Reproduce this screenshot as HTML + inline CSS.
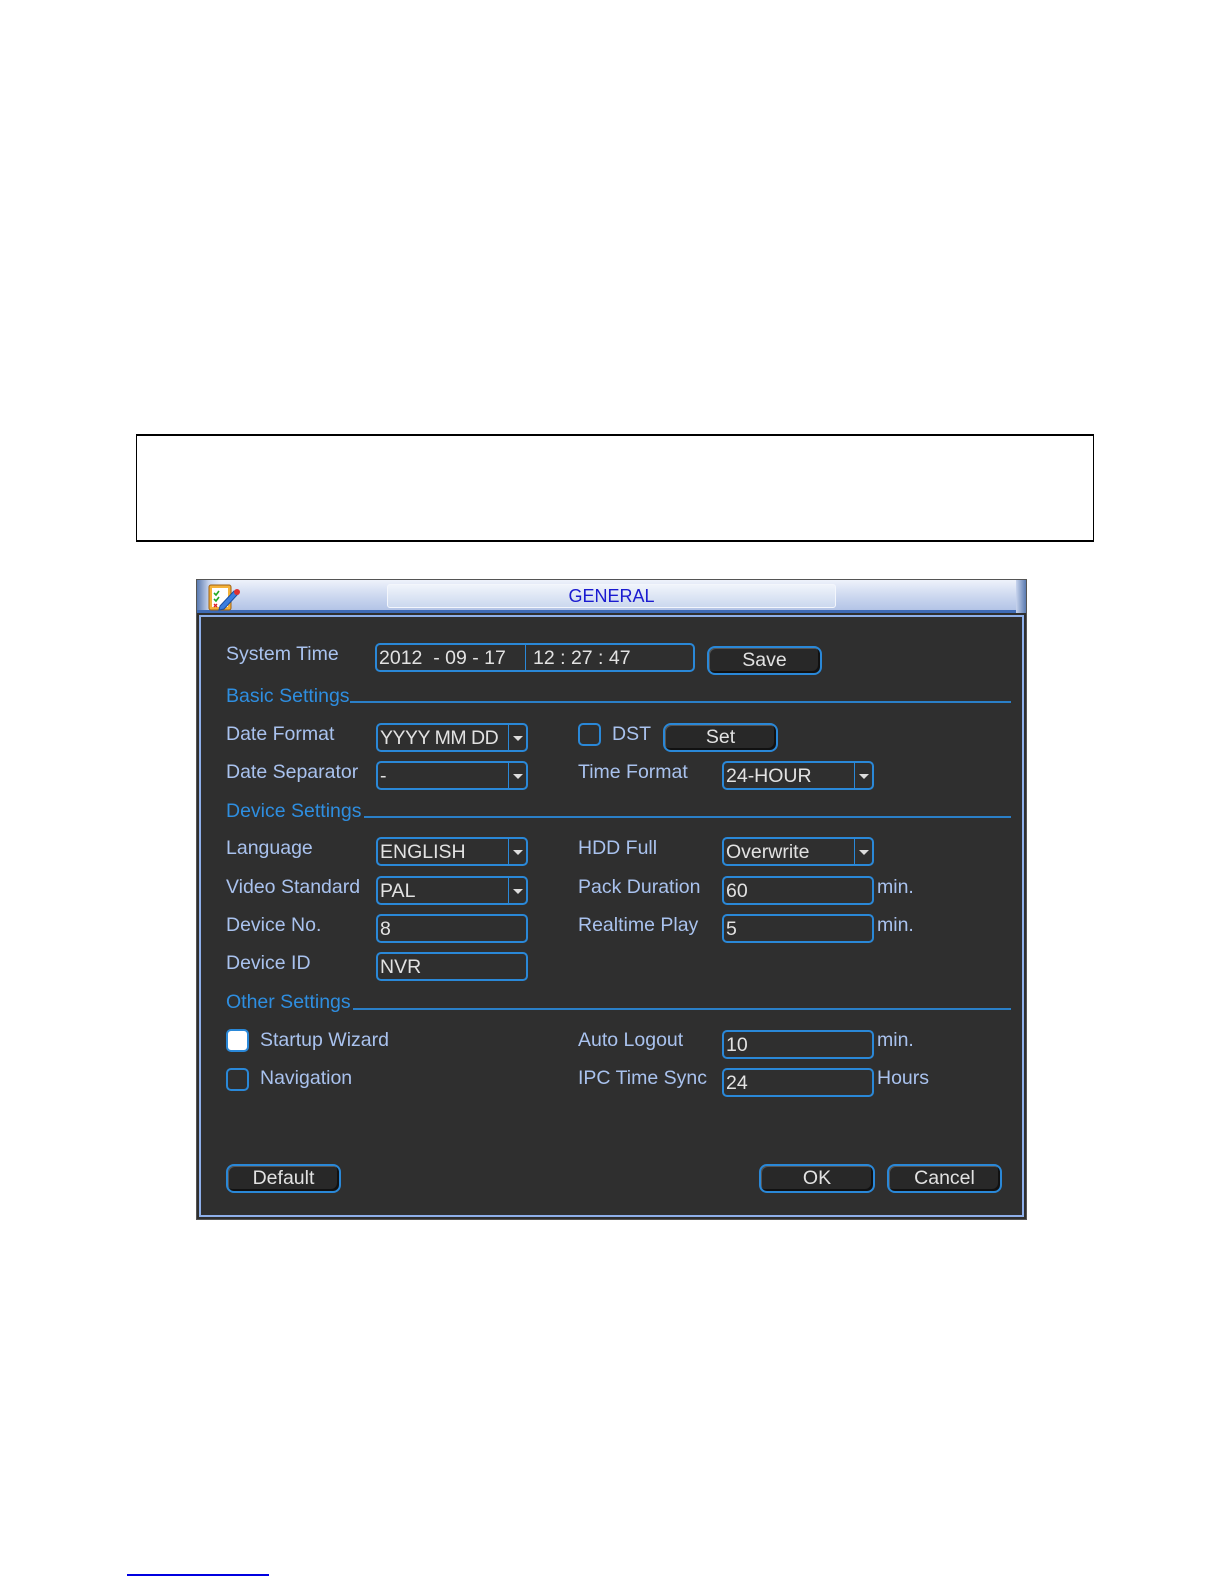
<!DOCTYPE html>
<html><head><meta charset="utf-8"><style>
*{margin:0;padding:0;box-sizing:border-box}
body{width:1225px;height:1585px;background:#fff;position:relative;overflow:hidden;font-family:"Liberation Sans",Arial,sans-serif}
.a{position:absolute}
.box{position:absolute;left:136px;top:434px;width:958px;height:108px;border:1px solid #000;border-top-width:2px;border-bottom-width:2px}
.link{position:absolute;left:127px;top:1574px;width:142px;height:2px;background:#0000e0}
.dlg{position:absolute;left:196px;top:579px;width:831px;height:641px;background:#2f2f2f;border:1px solid #555}
.tb{position:absolute;left:0;top:0;width:829px;height:33px;background:linear-gradient(90deg,#5a7ab0 0,#c9d5ee 12px,transparent 24px),linear-gradient(#eef2fb,#c9d5ee 60%,#b3c4e6);border-bottom:3px solid #3f6bb5}
.tb .c{position:absolute;left:190px;top:4px;width:449px;height:24px;border:1px solid #f3f6fc;border-radius:3px;background:linear-gradient(#f0f4fb,#cbd8ee);text-align:center;font-size:18px;line-height:23px;color:#1a1ad0}
.tb .r{position:absolute;right:0;top:0;width:10px;height:33px;background:linear-gradient(90deg,#c9d5ee,#5a7ab0)}
.inner{position:absolute;left:2px;top:35px;right:2px;bottom:2px;border:2px solid #8fb0ea}
.l{position:absolute;color:#a9c2ee;font-size:19.5px;line-height:28px;white-space:nowrap}
.h{position:absolute;color:#2e8ee0;font-size:19.5px;line-height:28px;white-space:nowrap}
.line{position:absolute;height:2px;background:#2a7fc8}
.in{position:absolute;height:29px;border:2px solid #2a88d8;border-radius:5px;color:#e2e2e2;font-size:19.5px;line-height:26px;padding-left:2px;white-space:nowrap}
.dd{position:absolute;right:0;top:0;width:18px;height:25px;border-left:1px solid #2a88d8}
.dd:after{content:"";position:absolute;left:4px;top:11px;border-left:5px solid transparent;border-right:5px solid transparent;border-top:5px solid #ddd}
.bt{position:absolute;height:29px;border:2px solid #2a88d8;border-radius:8px;background:#282828;box-shadow:inset -2px -2px 0 #111,inset 1px 1px 0 #555;color:#e2e2e2;font-size:19.5px;line-height:25px;text-align:center}
.cb{position:absolute;width:23px;height:23px;border:2px solid #2a88d8;border-radius:5px}
</style></head><body>
<div class="box"></div>
<div class="link"></div>

<div class="dlg">
 <div class="tb">
  <svg class="a" style="left:10px;top:2px" width="36" height="30" viewBox="0 0 36 30">
   <rect x="2" y="3" width="22" height="25" rx="2" fill="#f4b23a" stroke="#a06010"/>
   <rect x="5" y="6" width="16" height="19" fill="#fff"/>
   <path d="M7 11l2 2 3-4M7 17l2 2 3-4" stroke="#2a2" stroke-width="1.6" fill="none"/>
   <path d="M7 22l3 3M10 22l-3 3" stroke="#d22" stroke-width="1.4"/>
   <path d="M13 24l14-15 4 3-14 15-5 1z" fill="#3a7ee0" stroke="#1a4ea0"/>
   <circle cx="30" cy="10" r="3" fill="#e03030"/>
  </svg>
  <div class="c">GENERAL</div>
  <div class="r"></div>
 </div>
 <div class="inner"></div>
</div>

<div class="l" style="left:226px;top:640px">System Time</div>
<div class="in" style="left:375px;top:643px;width:320px;">2012&nbsp; - 09 - 17 <span style="position:absolute;left:148px;top:0;height:25px;border-left:1px solid #2a88d8;padding-left:7px">12 : 27 : 47</span></div>
<div class="bt" style="left:707px;top:646px;width:115px">Save</div>

<div class="h" style="left:226px;top:682px">Basic Settings</div>
<div class="line" style="left:350px;top:701px;width:661px"></div>

<div class="l" style="left:226px;top:720px">Date Format</div>
<div class="in" style="left:376px;top:723px;width:152px;letter-spacing:-0.5px">YYYY MM DD<div class="dd"></div></div>
<div class="cb" style="left:578px;top:723px"></div>
<div class="l" style="left:612px;top:720px">DST</div>
<div class="bt" style="left:663px;top:723px;width:115px">Set</div>

<div class="l" style="left:226px;top:758px">Date Separator</div>
<div class="in" style="left:376px;top:761px;width:152px">-<div class="dd"></div></div>
<div class="l" style="left:578px;top:758px">Time Format</div>
<div class="in" style="left:722px;top:761px;width:152px">24-HOUR<div class="dd"></div></div>

<div class="h" style="left:226px;top:797px">Device Settings</div>
<div class="line" style="left:364px;top:816px;width:647px"></div>

<div class="l" style="left:226px;top:834px">Language</div>
<div class="in" style="left:376px;top:837px;width:152px">ENGLISH<div class="dd"></div></div>
<div class="l" style="left:578px;top:834px">HDD Full</div>
<div class="in" style="left:722px;top:837px;width:152px">Overwrite<div class="dd"></div></div>

<div class="l" style="left:226px;top:873px">Video Standard</div>
<div class="in" style="left:376px;top:876px;width:152px">PAL<div class="dd"></div></div>
<div class="l" style="left:578px;top:873px">Pack Duration</div>
<div class="in" style="left:722px;top:876px;width:152px">60</div>
<div class="l" style="left:877px;top:873px">min.</div>

<div class="l" style="left:226px;top:911px">Device No.</div>
<div class="in" style="left:376px;top:914px;width:152px">8</div>
<div class="l" style="left:578px;top:911px">Realtime Play</div>
<div class="in" style="left:722px;top:914px;width:152px">5</div>
<div class="l" style="left:877px;top:911px">min.</div>

<div class="l" style="left:226px;top:949px">Device ID</div>
<div class="in" style="left:376px;top:952px;width:152px">NVR</div>

<div class="h" style="left:226px;top:988px">Other Settings</div>
<div class="line" style="left:353px;top:1008px;width:658px"></div>

<div class="cb" style="left:226px;top:1029px;background:#fff"></div>
<div class="l" style="left:260px;top:1026px">Startup Wizard</div>
<div class="l" style="left:578px;top:1026px">Auto Logout</div>
<div class="in" style="left:722px;top:1030px;width:152px">10</div>
<div class="l" style="left:877px;top:1026px">min.</div>

<div class="cb" style="left:226px;top:1068px"></div>
<div class="l" style="left:260px;top:1064px">Navigation</div>
<div class="l" style="left:578px;top:1064px">IPC Time Sync</div>
<div class="in" style="left:722px;top:1068px;width:152px">24</div>
<div class="l" style="left:877px;top:1064px">Hours</div>

<div class="bt" style="left:226px;top:1164px;width:115px">Default</div>
<div class="bt" style="left:759px;top:1164px;width:116px">OK</div>
<div class="bt" style="left:887px;top:1164px;width:115px">Cancel</div>
</body></html>
